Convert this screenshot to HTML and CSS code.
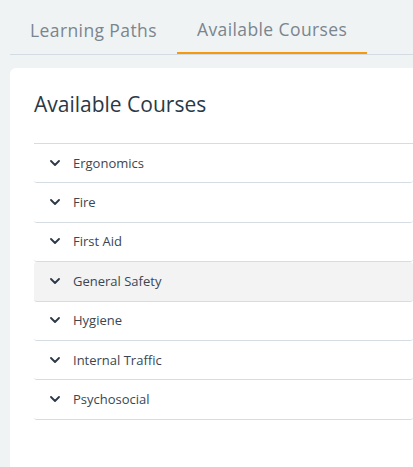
FILE: index.html
```html
<!DOCTYPE html>
<html>
<head>
<meta charset="utf-8">
<link rel="stylesheet" href="styles.css">
</head>
<body>
<div class="tabs">
  <div class="tab">Learning Paths</div>
  <div class="tab active">Available Courses</div>
</div>
<div class="card">
  <h1 class="title">Available Courses</h1>
  <ul class="list">
    <li class="row"><svg class="chev" viewBox="0 0 10 6"><path d="M1 1l4 4 4-4"/></svg><span>Ergonomics</span></li>
    <li class="row"><svg class="chev" viewBox="0 0 10 6"><path d="M1 1l4 4 4-4"/></svg><span>Fire</span></li>
    <li class="row"><svg class="chev" viewBox="0 0 10 6"><path d="M1 1l4 4 4-4"/></svg><span>First Aid</span></li>
    <li class="row hover"><svg class="chev" viewBox="0 0 10 6"><path d="M1 1l4 4 4-4"/></svg><span>General Safety</span></li>
    <li class="row"><svg class="chev" viewBox="0 0 10 6"><path d="M1 1l4 4 4-4"/></svg><span>Hygiene</span></li>
    <li class="row"><svg class="chev" viewBox="0 0 10 6"><path d="M1 1l4 4 4-4"/></svg><span>Internal Traffic</span></li>
    <li class="row"><svg class="chev" viewBox="0 0 10 6"><path d="M1 1l4 4 4-4"/></svg><span>Psychosocial</span></li>
  </ul>
</div>
</body>
</html>
```

FILE: styles.css
```css
html, body {
  margin: 0;
  padding: 0;
  background: #eff3f4;
  font-family: "Open Sans", "Liberation Sans", sans-serif;
  overflow: hidden;
  height: 100%;
}
.tabs {
  display: flex;
  margin-left: 10px;
  border-bottom: 1px solid #d3dce2;
  height: 54px;
}
.tab {
  padding: 6px 20px 0 20px;
  font-size: 17.5px;
  letter-spacing: 0.4px;
  color: #7b858d;
  display: flex;
  align-items: center;
  box-sizing: border-box;
  height: 54px;
}
.tab.active {
  border-bottom: 2.5px solid #f7990f;
}
.card {
  margin: 13px 0 0 10px;
  background: #fff;
  border-top-left-radius: 6px;
  padding: 20px 0 0 24px;
  height: calc(100% - 68px);
  box-sizing: border-box;
}
.title {
  margin: 0;
  font-weight: 400;
  font-size: 21px;
  line-height: 32px;
  color: #2b3845;
}
.list {
  list-style: none;
  margin: 23px 0 0 0;
  padding: 0;
  border-top: 1px solid #d5dde3;
}
.row {
  display: flex;
  align-items: center;
  height: 39.4px;
  box-sizing: border-box;
  border-bottom: 1px solid #d5dde3;
  padding-left: 16px;
  padding-bottom: 1px;
  font-size: 13px;
  color: #3b4651;
  border-radius: 3px;
}
.row.hover {
  background: #f3f3f3;
}
.chev {
  width: 10px;
  height: 6px;
  margin-right: 13px;
  fill: none;
  stroke: #2b3845;
  stroke-width: 1.8;
  stroke-linecap: round;
  stroke-linejoin: round;
}
```
